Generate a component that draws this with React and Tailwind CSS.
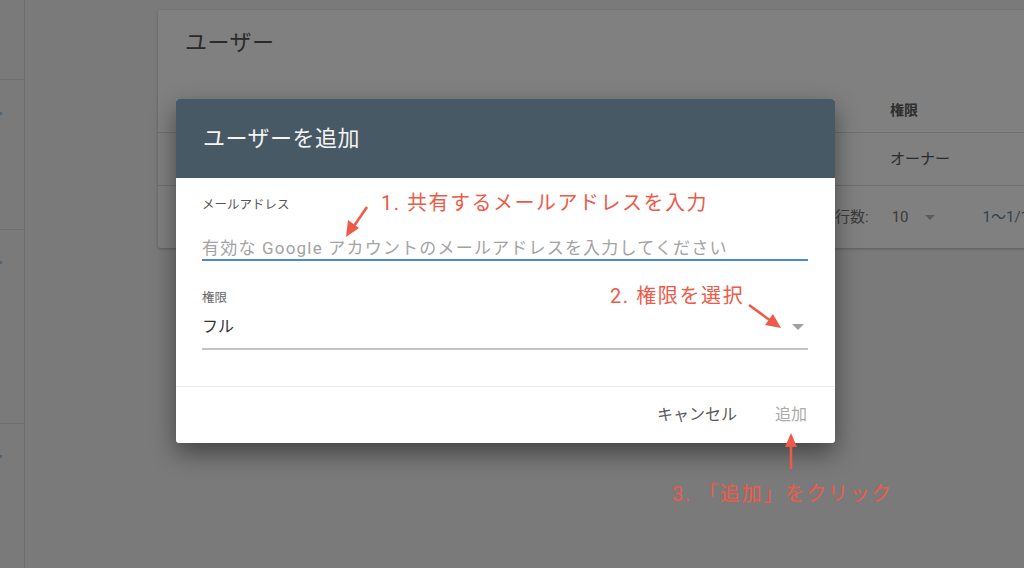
const FONT = "font-['Roboto','Noto_Sans_CJK_JP',sans-serif]";

function Sidebar() {
  return (
    <div className="w-[25px] shrink-0 h-full border-r border-[#6c6c6c] flex flex-col">
      <div className="h-[80px] border-b border-[#6e6e6e]" />
      <div className="h-[150px] border-b border-[#6e6e6e] pt-[32px]">
        <div className="w-[2px] h-[3px] bg-[#4f6475]" />
      </div>
      <div className="h-[194px] border-b border-[#6e6e6e] pt-[31px]">
        <div className="w-[2px] h-[3px] bg-[#4f6475]" />
      </div>
      <div className="pt-[31px]">
        <div className="w-[2px] h-[3px] bg-[#4f6475]" />
      </div>
    </div>
  );
}

function UsersCard() {
  return (
    <div className="w-[880px] shrink-0 bg-[#808080] rounded-[2px] shadow-[0_1px_3px_rgba(0,0,0,0.25)]">
      <div className="h-[78px] pt-[18px] pl-[27px] text-[22px] leading-[30px] text-[#2a2a2a] tracking-[0.5px]">ユーザー</div>
      <div className="h-[45px] border-b border-[#6f6f6f] flex items-center">
        <div className="w-[732px]" />
        <div className="text-[14px] font-bold text-[#2e2e2e]">権限</div>
      </div>
      <div className="h-[53px] border-b border-[#6f6f6f] flex items-center">
        <div className="w-[732px]" />
        <div className="text-[15px] text-[#2a2a2a]">オーナー</div>
      </div>
      <div className="h-[62px] flex items-center pl-[677px] text-[15px] text-[#3a3a3a]">
        <span>行数:</span>
        <span className="ml-[23px]">10</span>
        <span className="ml-[16px] w-0 h-0 border-l-[5px] border-r-[5px] border-t-[5px] border-l-transparent border-r-transparent border-t-[#5c5c5c]" />
        <span className="ml-[48px] text-[#34424d]">1〜1/1</span>
      </div>
    </div>
  );
}

function AddUserDialog() {
  return (
    <div className="absolute left-[176px] top-[99px] w-[659px] bg-white rounded-[3px] overflow-hidden shadow-[0_10px_24px_rgba(0,0,0,0.45)]">
      <div className="h-[79px] bg-[#475964] flex items-center pl-[27px] text-[22px] text-[#f4f4f4] tracking-[0.5px]">
        ユーザーを追加
      </div>
      <div className="px-[26px] pr-[27px]">
        <div className="pt-[19px] text-[12.5px] leading-[16px] text-[#555]">メールアドレス</div>
        <div className="mt-[16px] h-[32px] border-b-2 border-[#4a86e8] flex items-end pb-[1px] text-[17px] leading-[20px] text-[#a3a3a3] tracking-[1.2px]">
          有効な Google アカウントのメールアドレスを入力してください
        </div>
        <div className="mt-[29px] text-[12.5px] leading-[16px] text-[#666]">権限</div>
        <div className="h-[44px] border-b-2 border-[#c4c4c4] flex items-center justify-between text-[16px] leading-[20px] text-[#333]">
          <span>フル</span>
          <span className="mr-[4px] w-0 h-0 border-l-[6px] border-r-[6px] border-t-[6px] border-l-transparent border-r-transparent border-t-[#a0a0a0]" />
        </div>
      </div>
      <div className="mt-[36px] border-t border-[#eeeaea] h-[57px] flex items-center justify-end gap-[38px] pr-[28px] text-[16px]">
        <span className="text-[#5a5a5a]">キャンセル</span>
        <span className="text-[#ababab]">追加</span>
      </div>
    </div>
  );
}

function Annotations() {
  const red = "#ee5a48";
  return (
    <>
      <div className="absolute left-[381px] top-[190px] text-[20px] leading-[26px] text-[#ee5a48] tracking-[1.5px]">1. 共有するメールアドレスを入力</div>
      <div className="absolute left-[610px] top-[283px] text-[20px] leading-[26px] text-[#ee5a48] tracking-[1.6px]">2. 権限を選択</div>
      <div className="absolute left-[672px] top-[481px] text-[20px] leading-[26px] text-[#ee5a48] tracking-[1.6px]">3. 「追加」をクリック</div>
      <svg className="absolute left-0 top-0" width="1024" height="568" viewBox="0 0 1024 568">
        <line x1="367" y1="207" x2="354" y2="226" stroke={red} strokeWidth="2.5" />
        <polygon points="346,237 348,220 359,228" fill={red} />
        <line x1="749" y1="305" x2="771" y2="321" stroke={red} strokeWidth="2.5" />
        <polygon points="781,328 765,325 773,314" fill={red} />
        <line x1="791" y1="469" x2="791" y2="446" stroke={red} strokeWidth="2.5" />
        <polygon points="791,433 785,447 797,447" fill={red} />
      </svg>
    </>
  );
}

export default function App() {
  return (
    <div className={`relative w-[1024px] h-[568px] overflow-hidden bg-[#7a7a7a] ${FONT}`}>
      <div className="flex h-full">
        <Sidebar />
        <div className="flex-1 overflow-hidden pl-[133px] pt-[10px]">
          <UsersCard />
        </div>
      </div>
      <AddUserDialog />
      <Annotations />
    </div>
  );
}
